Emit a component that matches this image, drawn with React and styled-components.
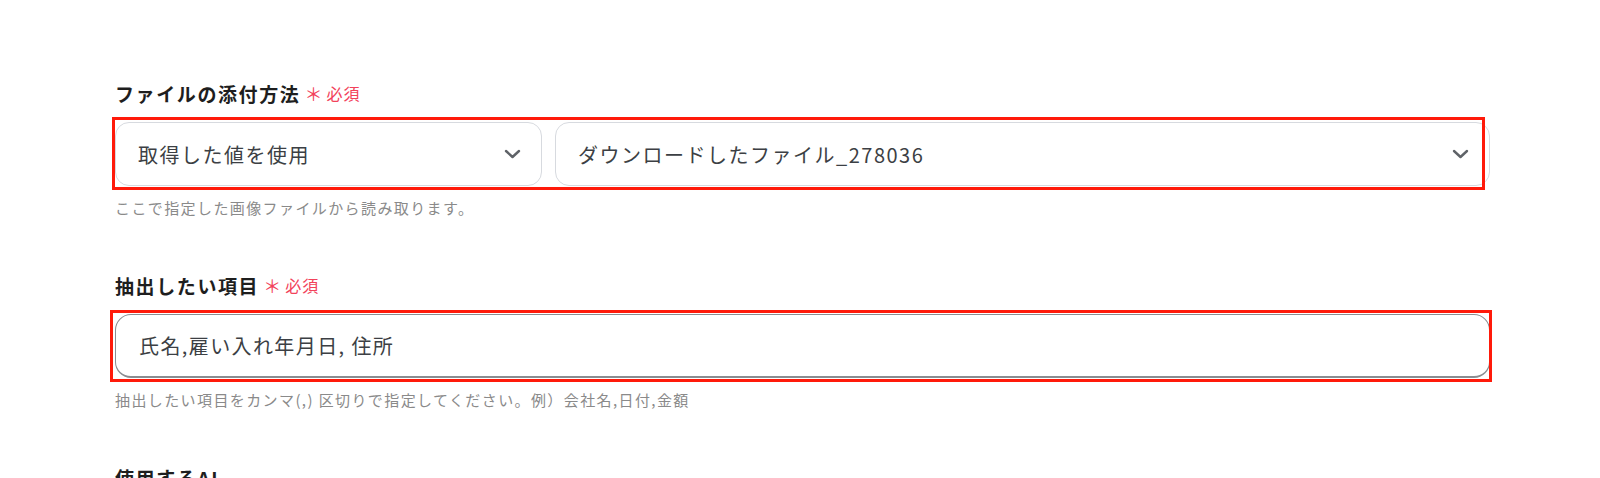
import React from "react";
import styled, { createGlobalStyle } from "styled-components";

const GlobalStyle = createGlobalStyle`
  body {
    margin: 0;
    background: #ffffff;
    font-family: "Noto Sans CJK JP", "Noto Sans", sans-serif;
  }
`;

const Page = styled.div`
  width: 1375px;
  padding: 81px 0 40px 115px;
`;

const Field = styled.div`
  margin-bottom: 55px;
`;

const Label = styled.div`
  display: flex;
  align-items: center;
  height: 24px;
  font-size: 19px;
  font-weight: 700;
  letter-spacing: 1.6px;
  color: #1e1e1e;
`;

const Required = styled.span`
  display: inline-flex;
  align-items: center;
  gap: 3px;
  margin-left: 4px;
  font-size: 16px;
  font-weight: 400;
  letter-spacing: 1px;
  color: #f2425a;

  b {
    font-weight: 400;
    font-size: 18px;
  }
`;

const Control = styled.div`
  position: relative;
  margin-top: 17px;
`;

const Highlight = styled.div`
  position: absolute;
  top: ${(p) => p.$top}px;
  left: ${(p) => p.$left}px;
  right: ${(p) => p.$right}px;
  bottom: ${(p) => p.$bottom}px;
  border: 3px solid #ff1a0a;
  pointer-events: none;
`;

const SelectRow = styled.div`
  display: grid;
  grid-template-columns: 427px 1fr;
  gap: 13px;
`;

const SelectBox = styled.div`
  display: flex;
  align-items: center;
  justify-content: space-between;
  height: 64px;
  box-sizing: border-box;
  padding: 0 20px 0 22px;
  border: 1px solid #d7dadf;
  border-radius: 14px;
  font-size: 20px;
  letter-spacing: 1.5px;
  color: #3c3f44;
`;

const TextInput = styled.div`
  display: flex;
  align-items: center;
  height: 64px;
  box-sizing: border-box;
  padding: 0 22px 0 23px;
  border: 1px solid #8a8d91;
  border-bottom-width: 2px;
  border-radius: 16px;
  font-size: 20px;
  letter-spacing: 1.4px;
  color: #3c3f44;
`;

const Helper = styled.div`
  margin-top: 12px;
  font-size: 15px;
  line-height: 20px;
  letter-spacing: 1.4px;
  color: #8a8a8a;
`;

const Chevron = () => (
  <svg width="17" height="10" viewBox="0 0 17 10" fill="none">
    <polyline
      points="2,2 8.5,8 15,2"
      stroke="#5f6368"
      strokeWidth="2.4"
      strokeLinecap="round"
      strokeLinejoin="round"
    />
  </svg>
);

const RequiredMark = () => (
  <Required>
    <b>＊</b>必須
  </Required>
);

export default function App() {
  return (
    <Page>
      <GlobalStyle />

      <Field>
        <Label>
          ファイルの添付方法
          <RequiredMark />
        </Label>
        <Control>
          <SelectRow>
            <SelectBox>
              <span>取得した値を使用</span>
              <Chevron />
            </SelectBox>
            <SelectBox>
              <span>ダウンロードしたファイル_278036</span>
              <Chevron />
            </SelectBox>
          </SelectRow>
          <Highlight $top={-5} $left={-3} $right={5} $bottom={-4} />
        </Control>
        <Helper>ここで指定した画像ファイルから読み取ります。</Helper>
      </Field>

      <Field>
        <Label>
          抽出したい項目
          <RequiredMark />
        </Label>
        <Control>
          <TextInput>氏名,雇い入れ年月日, 住所</TextInput>
          <Highlight $top={-4} $left={-5} $right={-2} $bottom={-4} />
        </Control>
        <Helper>
          抽出したい項目をカンマ(,) 区切りで指定してください。例）会社名,日付,金額
        </Helper>
      </Field>

      <Field>
        <Label>使用するAI</Label>
      </Field>
    </Page>
  );
}
